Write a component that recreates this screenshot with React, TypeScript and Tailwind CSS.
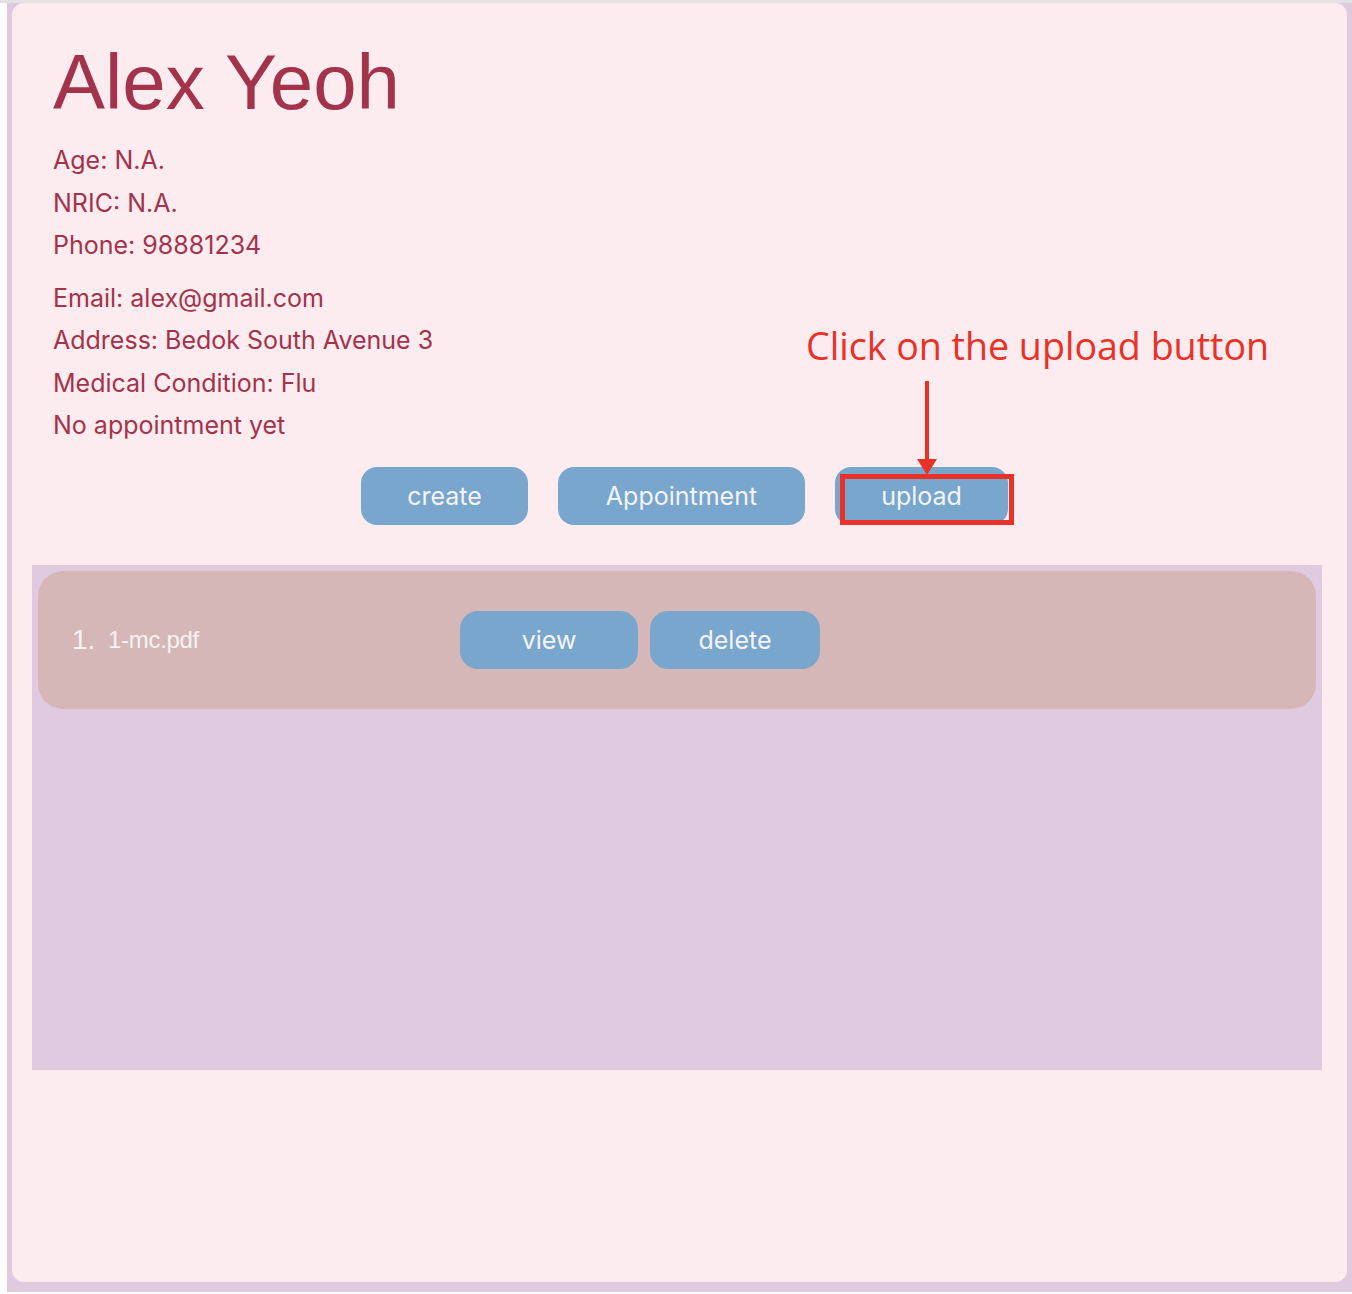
const details = [
  "Age: N.A.",
  "NRIC: N.A.",
  "Phone: 98881234",
];

const details2 = [
  "Email: alex@gmail.com",
  "Address: Bedok South Avenue 3",
  "Medical Condition: Flu",
  "No appointment yet",
];

const sf = { fontFamily: "Inter, 'Noto Sans', sans-serif" };

function PillButton({ label, width }: { label: string; width: string }) {
  return (
    <button
      className={`flex h-[58px] ${width} items-center justify-center rounded-[16px] bg-[#78a6cc] pt-[3px] text-[25px] text-[#f4f4f8]`}
      style={sf}
    >
      {label}
    </button>
  );
}

export default function App() {
  return (
    <div className="min-h-screen border-t-[3px] border-[#e2e2e2] bg-white pl-[7px]">
      <div className="h-[1289px] bg-[#dfcadf] px-[5px] pb-[10px]">
        <div className="relative h-full rounded-[12px] bg-[#fcebef]">
          <div className="pl-[41px] pt-[34px]">
            <h1
              className="text-[78px] leading-[90px] text-[#a3334b]"
              style={{ fontFamily: "'Liberation Sans', Arial, sans-serif" }}
            >
              Alex Yeoh
            </h1>
            <div className="mt-[12px] text-[25px] leading-[42.5px] text-[#a3334b]" style={sf}>
              {details.map((d) => (
                <p key={d}>{d}</p>
              ))}
            </div>
            <div className="mt-[10px] text-[25px] leading-[42.5px] text-[#a3334b]" style={sf}>
              {details2.map((d) => (
                <p key={d}>{d}</p>
              ))}
            </div>
          </div>

          <div className="mt-[20px] flex justify-center gap-[30px] pl-[10px]">
            <PillButton label="create" width="w-[167px]" />
            <PillButton label="Appointment" width="w-[247px]" />
            <div className="relative">
              <PillButton label="upload" width="w-[173px]" />
              <div className="absolute left-[5px] top-[7px] h-[51px] w-[174px] border-[5px] border-[#e83127]" />
              <div className="absolute left-[90px] top-[-86px] h-[80px] w-[4px] bg-[#e83127]" />
              <svg className="absolute left-[82px] top-[-8px]" width="20" height="16" viewBox="0 0 20 16">
                <polygon points="0,0 20,0 10,16" fill="#e83127" />
              </svg>
              <p
                className="absolute left-[-29px] top-[-149px] whitespace-nowrap text-[37.6px] text-[#e83127]"
                style={{ fontFamily: "'Open Sans', 'Noto Sans', sans-serif" }}
              >
                Click on the upload button
              </p>
            </div>
          </div>

          <div className="ml-[20px] mt-[40px] h-[505px] w-[1290px] bg-[#dfcadf] p-[6px]">
            <div className="flex h-[138px] items-center rounded-[25px] bg-[#d5b7b8] pl-[34px]">
              <div className="flex w-[388px] items-center text-[#f7f2f2]" style={{ fontFamily: "'Liberation Sans', Arial, sans-serif" }}>
                <span className="w-[36px] text-[28px]">1.</span>
                <span className="text-[24px] tracking-[-0.3px]">1-mc.pdf</span>
              </div>
              <div className="flex gap-[12px]">
                <button className="flex h-[58px] w-[178px] items-center justify-center rounded-[18px] bg-[#78a6cc] pt-[3px] text-[25px] text-[#f4f4f8]" style={sf}>
                  view
                </button>
                <button className="flex h-[58px] w-[170px] items-center justify-center rounded-[18px] bg-[#78a6cc] pt-[3px] text-[25px] text-[#f4f4f8]" style={sf}>
                  delete
                </button>
              </div>
            </div>
          </div>
        </div>
      </div>
    </div>
  );
}
